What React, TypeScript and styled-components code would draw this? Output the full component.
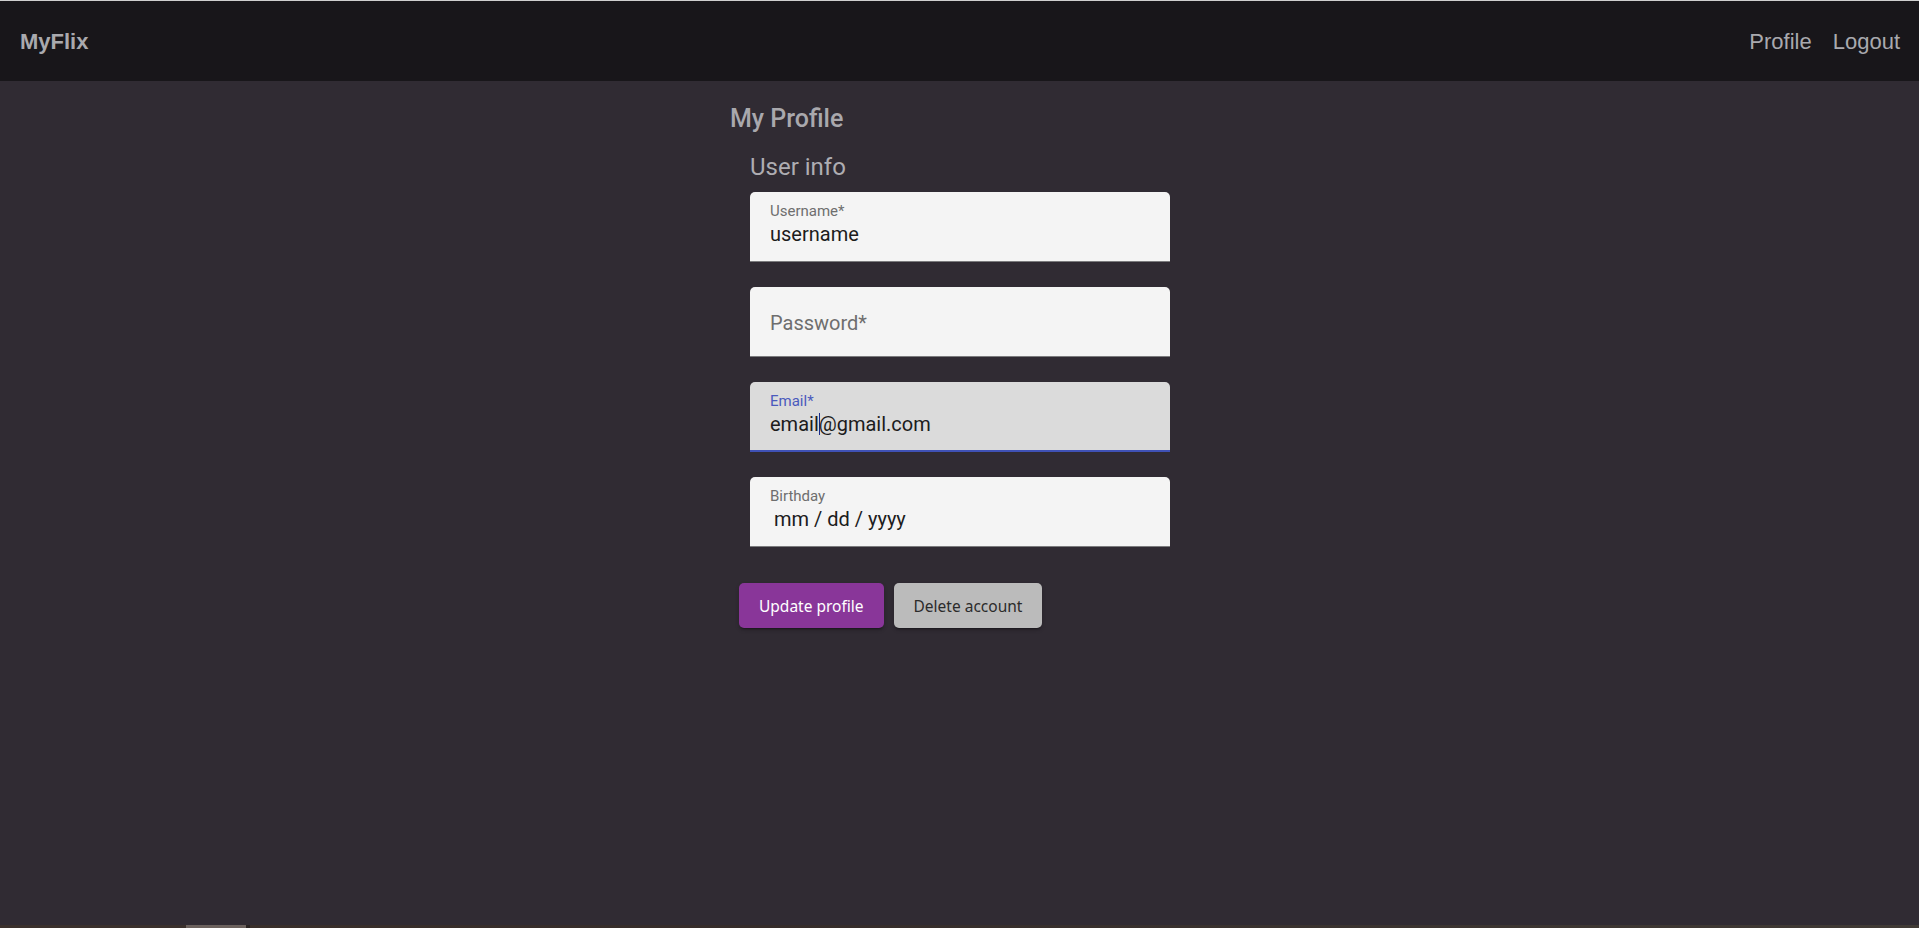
import React from "react";
import styled, { createGlobalStyle } from "styled-components";

const GlobalStyle = createGlobalStyle`
  html, body {
    margin: 0;
    padding: 0;
    background: #302b33;
  }
  body {
    font-family: Roboto, "Liberation Sans", Arial, sans-serif;
  }
  * { box-sizing: border-box; }
`;

const Page = styled.div`
  min-height: 100vh;
  display: flex;
  flex-direction: column;
  background: #302b33;
`;

const NavBar = styled.nav`
  height: 81px;
  border-top: 1px solid #cfcfcf;
  background: #18161a;
  display: flex;
  align-items: center;
  justify-content: space-between;
  padding: 2px 19px 0 20px;
  font-family: "Liberation Sans", Arial, sans-serif;
`;

const Brand = styled.a`
  font-size: 22px;
  font-weight: 700;
  color: #a9a9ae;
  text-decoration: none;
`;

const NavLinks = styled.div`
  display: flex;
  gap: 21px;
`;

const NavLink = styled.a`
  font-size: 22px;
  color: #a9a9ae;
  text-decoration: none;
`;

const Main = styled.main`
  flex: 1;
  display: flex;
  justify-content: center;
`;

const Column = styled.div`
  width: 460px;
  margin-left: 1px;
  padding-top: 23px;
  display: flex;
  flex-direction: column;
`;

const Title = styled.h1`
  margin: 0;
  font-size: 25px;
  font-weight: 500;
  line-height: 30px;
  color: #a9a8ad;
`;

const Section = styled.section`
  padding-left: 20px;
  display: flex;
  flex-direction: column;
`;

const SubTitle = styled.h2`
  margin: 18px 0 0;
  font-size: 24px;
  font-weight: 400;
  line-height: 30px;
  color: #aeadb2;
`;

const Fields = styled.div`
  margin-top: 10px;
  display: flex;
  flex-direction: column;
  gap: 25px;
`;

const Field = styled.div<{ $focused?: boolean }>`
  width: 420px;
  height: 70px;
  border-radius: 5px 5px 0 0;
  background: ${(p) => (p.$focused ? "#dbdbdb" : "#f4f4f4")};
  border-bottom: ${(p) => (p.$focused ? "2px solid #3f51b5" : "1px solid #7b7b7d")};
  padding: 10px 20px 0;
  display: flex;
  flex-direction: column;
`;

const Label = styled.span<{ $focused?: boolean }>`
  font-size: 15px;
  line-height: 18px;
  color: ${(p) => (p.$focused ? "#4a5abd" : "#6e6e6e")};
`;

const Value = styled.span<{ $indent?: boolean }>`
  margin-top: 2px;
  font-size: 20px;
  line-height: 24px;
  color: #1c1c1c;
  padding-left: ${(p) => (p.$indent ? "4px" : "0")};
  white-space: pre;
`;

const Placeholder = styled.span`
  margin-top: 14px;
  font-size: 20px;
  line-height: 24px;
  color: #6e6e6e;
`;

const Caret = styled.span`
  display: inline-block;
  width: 1px;
  height: 22px;
  margin: 0 -1px -4px 0;
  background: #1a2a8a;
`;

const Actions = styled.div`
  margin: 36px 0 0 9px;
  display: flex;
  gap: 10px;
`;

const Button = styled.button<{ $variant: "primary" | "secondary" }>`
  height: 45px;
  padding: 0 20px;
  border: none;
  border-radius: 5px;
  font-family: "Noto Sans", "Open Sans", sans-serif;
  font-size: 15.5px;
  cursor: pointer;
  background: ${(p) => (p.$variant === "primary" ? "#893699" : "#bbbbbb")};
  color: ${(p) => (p.$variant === "primary" ? "#ffffff" : "#2b2b2b")};
  box-shadow: 0 3px 2px -2px rgba(0, 0, 0, 0.35), 0 2px 4px rgba(0, 0, 0, 0.2);
`;

const TaskStrip = styled.div`
  height: 3px;
  display: flex;
  background: linear-gradient(90deg, #3b302b 0%, #352c2a 40%, #403a35 100%);
`;

const StripSegment = styled.div<{ $w: number; $c: string }>`
  width: ${(p) => p.$w}px;
  background: ${(p) => p.$c};
`;

export default function App() {
  return (
    <Page>
      <GlobalStyle />
      <NavBar>
        <Brand href="#">MyFlix</Brand>
        <NavLinks>
          <NavLink href="#">Profile</NavLink>
          <NavLink href="#">Logout</NavLink>
        </NavLinks>
      </NavBar>
      <Main>
        <Column>
          <Title>My Profile</Title>
          <Section>
            <SubTitle>User info</SubTitle>
            <Fields>
              <Field>
                <Label>Username*</Label>
                <Value>username</Value>
              </Field>
              <Field>
                <Placeholder>Password*</Placeholder>
              </Field>
              <Field $focused>
                <Label $focused>Email*</Label>
                <Value>
                  email<Caret />@gmail.com
                </Value>
              </Field>
              <Field>
                <Label>Birthday</Label>
                <Value $indent>mm / dd / yyyy</Value>
              </Field>
            </Fields>
          </Section>
          <Actions>
            <Button $variant="primary">Update profile</Button>
            <Button $variant="secondary">Delete account</Button>
          </Actions>
        </Column>
      </Main>
      <TaskStrip>
        <StripSegment $w={186} $c="#3a302c" />
        <StripSegment $w={60} $c="#6b615d" />
        <StripSegment $w={4} $c="#2a2422" />
      </TaskStrip>
    </Page>
  );
}
